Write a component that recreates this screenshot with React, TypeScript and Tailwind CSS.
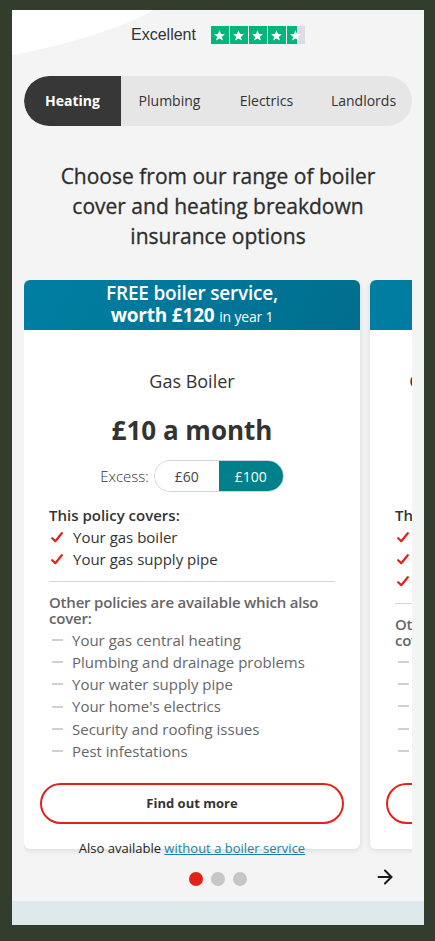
import { ArrowRight } from 'lucide-react'

const tabs = ['Heating', 'Plumbing', 'Electrics', 'Landlords']

interface Plan {
  title: string
  price: string
  covers: string[]
  others: string[]
}

const plans: Plan[] = [
  {
    title: 'Gas Boiler',
    price: '£10 a month',
    covers: ['Your gas boiler', 'Your gas supply pipe'],
    others: [
      'Your gas central heating',
      'Plumbing and drainage problems',
      'Your water supply pipe',
      "Your home's electrics",
      'Security and roofing issues',
      'Pest infestations',
    ],
  },
  {
    title: 'Gas Boiler and Central Heating',
    price: '£14 a month',
    covers: ['Your gas boiler', 'Your gas supply pipe', 'Your central heating'],
    others: [
      'Plumbing and drainage problems',
      'Your water supply pipe',
      "Your home's electrics",
      'Security and roofing issues',
      'Pest infestations',
    ],
  },
]

function Stars() {
  return (
    <div className="flex gap-[1px]">
      {[0, 1, 2, 3, 4].map((i) => (
        <div
          key={i}
          className={
            i < 4
              ? 'w-[18px] h-[18px] bg-[#00b67a] flex items-center justify-center'
              : 'w-[18px] h-[18px] bg-[linear-gradient(90deg,#00b67a_0%,#00b67a_55%,#dcdce6_55%)] flex items-center justify-center'
          }
        >
          <svg width="13" height="13" viewBox="0 0 24 24">
            <path
              fill="#fff"
              d="M12 2.5l2.8 6.6 7.2.6-5.5 4.7 1.7 7-6.2-3.8-6.2 3.8 1.7-7L2 9.7l7.2-.6z"
            />
          </svg>
        </div>
      ))}
    </div>
  )
}

function Check() {
  return (
    <svg width="12" height="11" viewBox="0 0 12 11" className="shrink-0">
      <path d="M1.2 6.2 L4.3 9.2 L10.8 1.2" fill="none" stroke="#e3211b" strokeWidth="2.2" strokeLinecap="round" strokeLinejoin="round" />
    </svg>
  )
}

function Card({ plan }: { plan: Plan }) {
  return (
    <div className="w-[336px] shrink-0 bg-white rounded-[6px] shadow-[0_1px_6px_rgba(0,0,0,0.12)] overflow-hidden">
      <div className="h-[50px] bg-[linear-gradient(120deg,#007fa3_0%,#007597_60%,#006e8d_100%)] flex flex-col items-center justify-center text-white leading-[22px]">
        <div className="text-[19px] font-semibold tracking-[-0.2px]">FREE boiler service,</div>
        <div className="text-[19px] font-bold tracking-[-0.2px]">
          worth £120 <span className="text-[14px] font-normal">in year 1</span>
        </div>
      </div>
      <div className="px-[16px] pb-[25px]">
        <div className="pt-[39px] text-center text-[18px] leading-[24px] text-[#333] whitespace-nowrap">{plan.title}</div>
        <div className="mt-[21px] text-center text-[26px] leading-[32px] font-bold text-[#333]">{plan.price}</div>
        <div className="mt-[14px] flex items-center justify-center gap-[5px]">
          <span className="text-[15px] font-light text-[#333]">Excess:</span>
          <div className="flex h-[32px] w-[130px] rounded-full border border-[#cfd5da] overflow-hidden text-[14px]">
            <div className="flex-1 flex items-center justify-center text-[#444] bg-white">£60</div>
            <div className="flex-1 flex items-center justify-center text-white bg-[#00808a]">£100</div>
          </div>
        </div>
        <div className="px-[9px]">
          <div className="mt-[13px] text-[15px] leading-[20px] font-semibold text-[#333]">This policy covers:</div>
          <ul className="mt-[1px]">
            {plan.covers.map((c) => (
              <li key={c} className="flex items-center gap-[10px] h-[22px] text-[15px] text-[#333] pl-[2px]">
                <Check />
                <span className="whitespace-nowrap">{c}</span>
              </li>
            ))}
          </ul>
          <div className="mt-[11px] border-t border-[#d6d6d6]" />
          <div className="mt-[12px] text-[15px] leading-[16px] font-semibold tracking-[-0.2px] text-[#666]">
            Other policies are available which also cover:
          </div>
          <ul className="mt-[3px]">
            {plan.others.map((o) => (
              <li key={o} className="flex items-center gap-[9px] h-[22.2px] text-[15px] text-[#666] pl-[3px]">
                <span className="w-[11px] h-[2px] bg-[#d0d0d0] shrink-0" />
                <span className="whitespace-nowrap">{o}</span>
              </li>
            ))}
          </ul>
        </div>
        <button className="mt-[21px] w-full h-[41px] rounded-full border-2 border-[#e3211b] text-[13px] font-bold text-[#333]">
          Find out more
        </button>
      </div>
    </div>
  )
}

export default function App() {
  return (
    <div className="w-full h-[941px] bg-[#323d2e] pt-[10px] font-['Open_Sans',sans-serif]">
      <div className="relative ml-[12px] w-[412px] h-[915px] bg-[#f4f4f4] overflow-hidden flex flex-col">
        <svg className="absolute left-0 top-0" width="160" height="50" viewBox="0 0 160 50">
          <path d="M0 0 H142 Q90 28 0 45 Z" fill="#fff" />
        </svg>

        <div className="relative pt-[16px] flex items-center justify-center gap-[15px]">
          <span className="font-['Liberation_Sans',Arial,sans-serif] text-[16px] text-[#333] leading-[18px]">Excellent</span>
          <Stars />
        </div>

        <div className="mt-[32px] mx-[12px] h-[50px] rounded-full bg-[#e6e6e6] flex overflow-hidden">
          {tabs.map((t, i) => (
            <div
              key={t}
              className={
                i === 0
                  ? 'w-[97px] flex items-center justify-center rounded-full rounded-r-none bg-[#373737] text-white font-bold text-[14px] pb-[2px]'
                  : 'flex-1 flex items-center justify-center text-[#333] text-[14px] pb-[2px]'
              }
            >
              {t}
            </div>
          ))}
        </div>

        <h1 className="mt-[35px] px-[40px] text-center text-[21px] leading-[30px] font-medium text-[#2d2d2d] [-webkit-text-stroke:0.3px_#2d2d2d]">
          Choose from our range of boiler cover and heating breakdown insurance options
        </h1>

        <div className="mt-[29px] mx-[12px] overflow-hidden">
          <div className="flex gap-[10px]">
            {plans.map((p, i) => (
              <div key={p.title} className="shrink-0 w-[336px] flex flex-col">
                <Card plan={p} />
                <div className="relative -mt-[10px] text-center text-[13px] leading-[18px] text-[#222]">
                  {i === 0 ? 'Also available ' : ''}
                  {i === 0 && (
                    <span className="text-[#1c7fa3] underline">without a boiler service</span>
                  )}
                </div>
              </div>
            ))}
          </div>
        </div>

        <div className="relative mt-[15px] flex items-center justify-center gap-[8px] h-[14px]">
          <span className="w-[14px] h-[14px] rounded-full bg-[#e3211b]" />
          <span className="w-[14px] h-[14px] rounded-full bg-[#c6c6c6]" />
          <span className="w-[14px] h-[14px] rounded-full bg-[#c6c6c6]" />
          <ArrowRight className="absolute right-[28px] top-[-6px] text-[#1a1a1a]" size={22} strokeWidth={2.2} />
        </div>

        <div className="mt-auto h-[24px] bg-[#dde9ea]" />
      </div>
    </div>
  )
}
